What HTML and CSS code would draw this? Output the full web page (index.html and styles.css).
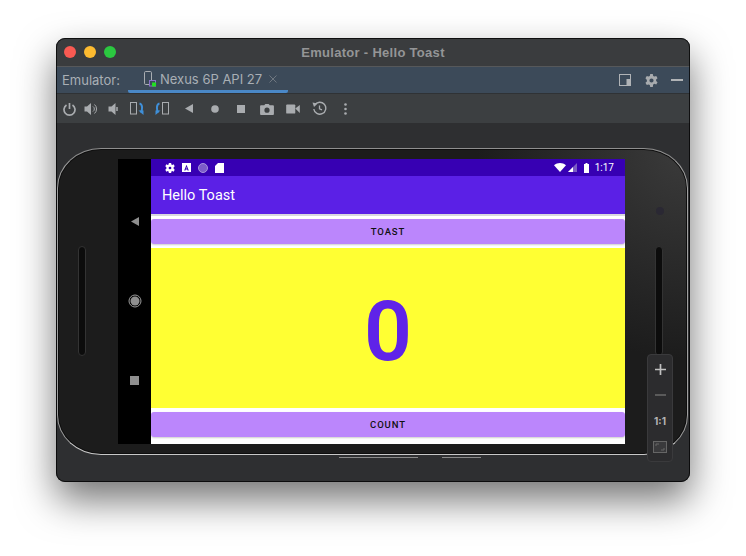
FILE: index.html
```html
<!DOCTYPE html>
<html lang="en">
<head>
    <meta charset="UTF-8">
    <meta name="viewport" content="width=device-width, initial-scale=1.0">
    <title>Emulator - Hello Toast</title>
    <link rel="stylesheet" href="styles.css">
</head>
<body>
    <div class="window">
        <div class="titlebar">
            <div class="lights">
                <span class="light red"></span>
                <span class="light yellow"></span>
                <span class="light green"></span>
            </div>
            <div class="window-title">Emulator - Hello Toast</div>
        </div>

        <div class="tabbar">
            <span class="tool-name">Emulator:</span>
            <div class="tab">
                <svg class="tab-icon" width="14" height="16" viewBox="0 0 14 16">
                    <rect x="0.5" y="0.5" width="7" height="13" rx="1.2" fill="none" stroke="#a9adb1"/>
                    <rect x="5.5" y="9.5" width="6" height="5.500" fill="#3c4a59" stroke="#8a72c8"/>
                    <rect x="8" y="11.500" width="4" height="4" fill="#22e022"/>
                </svg>
                <span class="tab-label">Nexus 6P API 27</span>
                <svg class="tab-close" width="8" height="8" viewBox="0 0 8 8">
                    <path d="M0.5 0.5 7.5 7.5M7.5 0.5 0.5 7.5" stroke="#6f7780" fill="none"/>
                </svg>
            </div>
            <div class="tab-actions">
                <span class="tool">
                    <svg width="12" height="12" viewBox="0 0 12 12">
                        <rect x="0.5" y="0.5" width="11" height="11" fill="none" stroke="#b0b3b6"/>
                        <rect x="7.500" y="5" width="4" height="6.500" fill="#b0b3b6"/>
                    </svg>
                </span>
                <span class="tool">
                    <svg width="13" height="13" viewBox="2 2 20 20">
                        <path fill="#a8abae" fill-rule="evenodd" d="M10 2h4l.6 2.900 1.900 1.100 2.800-1 2 3.500-2.200 1.900v2.200l2.200 1.900-2 3.500-2.800-1-1.900 1.100L14 22h-4l-.6-2.900-1.900-1.100-2.800 1-2-3.500 2.200-1.900v-2.200L2.700 8.500l2-3.500 2.800 1 1.900-1.100zM12 8.800a3.200 3.200 0 1 0 0 6.400 3.200 3.200 0 0 0 0-6.400z"/>
                    </svg>
                </span>
                <span class="tool"><span class="minimize"></span></span>
            </div>
        </div>

        <div class="toolbar">
            <span class="tool narrow"><svg width="13" height="14" viewBox="0 0 13 14"><path d="M3.500 3a5.500 5.500 0 1 0 6 0M6.500 1v6" fill="none" stroke="#a9acaf" stroke-width="1.700"/></svg></span>
            <span class="tool narrow"><svg width="14" height="14" viewBox="0 0 14 14"><path d="M0.500 4.500h2.500l4-3.500v12l-4-3.500h-2.500z" fill="#a9acaf"/><path d="M9 4.500a3 3 0 0 1 0 5M10.500 2.500a6 6 0 0 1 0 9" fill="none" stroke="#a9acaf"/></svg></span>
            <span class="tool narrow"><svg width="11" height="14" viewBox="0 0 11 14"><path d="M0.500 4.500h3l4-3.500v12l-4-3.500h-3z" fill="#a9acaf"/><path d="M9 5v4" stroke="#a9acaf" stroke-width="1.500"/></svg></span>
            <span class="tool"><svg width="15" height="13" viewBox="0 0 15 13"><rect x="0.500" y="0.500" width="6" height="11.500" fill="none" stroke="#a9acaf"/><path d="M9.500 1.500c3 .5 3.500 6.500 1 9" fill="none" stroke="#3f8fd8" stroke-width="2"/><path d="M8.500 8.500h5v4.500z" fill="#3f8fd8"/></svg></span>
            <span class="tool narrow"><svg width="15" height="13" viewBox="0 0 15 13"><path d="M5.500 1.500c-3 .5-3.500 6.500-1 9" fill="none" stroke="#3f8fd8" stroke-width="2"/><path d="M6.500 8.500h-5V13z" fill="#3f8fd8"/><rect x="8.500" y="0.500" width="6" height="11.500" fill="none" stroke="#a9acaf"/></svg></span>
            <span class="tool spaced"><svg width="8" height="9" viewBox="0 0 8 9"><path d="M8 0v9L0 4.500z" fill="#a9acaf"/></svg></span>
            <span class="tool"><svg width="8" height="8" viewBox="0 0 8 8"><circle cx="4" cy="4" r="3.800" fill="#a9acaf"/></svg></span>
            <span class="tool"><svg width="8" height="8" viewBox="0 0 8 8"><rect width="8" height="8" fill="#a9acaf"/></svg></span>
            <span class="tool"><svg width="14" height="12" viewBox="0 0 15 13"><path fill="#a9acaf" fill-rule="evenodd" d="M1 2.500h3.500L5.700 1h3.600l1.200 1.500H14a1 1 0 0 1 1 1V12a1 1 0 0 1-1 1H1a1 1 0 0 1-1-1V3.500a1 1 0 0 1 1-1zM7.500 5a2.800 2.800 0 1 0 0 5.600 2.800 2.800 0 0 0 0-5.600z"/></svg></span>
            <span class="tool"><svg width="14" height="10" viewBox="0 0 15 11"><rect y="0.500" width="10" height="10" rx="1" fill="#a9acaf"/><path d="M10 5l5-4v9z" fill="#a9acaf"/></svg></span>
            <span class="tool"><svg width="15" height="15" viewBox="0 0 15 15"><path d="M2.700 4a6 6 0 1 1-.9 4" fill="none" stroke="#a9acaf" stroke-width="1.400"/><path d="M0.500 1.500l5 1-3.500 3.500z" fill="#a9acaf"/><path d="M7.500 4.500v3.300l2.500 1" fill="none" stroke="#a9acaf" stroke-width="1.300"/></svg></span>
            <span class="tool"><svg width="3" height="12" viewBox="0 0 3 12"><circle cx="1.500" cy="1.500" r="1.300" fill="#a9acaf"/><circle cx="1.500" cy="6" r="1.300" fill="#a9acaf"/><circle cx="1.500" cy="10.500" r="1.300" fill="#a9acaf"/></svg></span>
        </div>

        <div class="canvas">
            <div class="phone">
                <span class="grille grille-left"></span>
                <span class="grille grille-right"></span>
                <span class="camera"></span>

                <div class="navbar">
                    <svg width="8" height="9" viewBox="0 0 8 9"><path d="M8 0v9L0 4.500z" fill="#8f8f8f"/></svg>
                    <svg width="14" height="14" viewBox="0 0 14 14"><circle cx="7" cy="7" r="6" fill="none" stroke="#9a9a9a"/><circle cx="7" cy="7" r="4.500" fill="#8f8f8f"/></svg>
                    <svg width="9" height="9" viewBox="0 0 9 9"><rect width="9" height="9" fill="#8f8f8f"/></svg>
                </div>

                <div class="screen">
                    <div class="statusbar">
                        <div class="status-icons">
                            <svg width="10" height="10" viewBox="1 1 22 22"><path fill="#fff" fill-rule="evenodd" d="M9.500 1h5l.6 3.200 1.800 1 3-1.200 2.500 4.300-2.400 2.100v3.200l2.400 2.100-2.500 4.300-3-1.200-1.800 1-.6 3.200h-5l-.6-3.200-1.800-1-3 1.200-2.500-4.300 2.400-2.100v-3.200L1.600 8.300 4.100 4l3 1.200 1.800-1zM12 9a3 3 0 1 0 0 6 3 3 0 0 0 0-6z"/></svg>
                            <svg width="9" height="9" viewBox="0 0 9 9"><path fill="#fff" fill-rule="evenodd" d="M0 0h9v9H0zM4.500 1.800 2.200 7.500h1.200l.4-1.100h1.400l.4 1.100h1.200zM4.500 3.800l.4 1.600H4.100z"/></svg>
                            <svg width="10" height="10" viewBox="0 0 10 10"><circle cx="5" cy="5" r="4.500" fill="#7d5cc9" stroke="#a794dc"/></svg>
                            <svg width="9" height="10" viewBox="0 0 9 10"><path d="M3 0h6v10H0V3z" fill="#fff"/></svg>
                        </div>
                        <div class="status-right">
                            <svg width="12" height="9" viewBox="0 0 12 9"><path d="M0 2.200C3.500-.7 8.500-.7 12 2.200L6 9z" fill="#fff"/></svg>
                            <svg width="9" height="9" viewBox="0 0 9 9"><path d="M9 0v9H0z" fill="#7a5cc4"/><path d="M5 4v5H0z" fill="#fff"/></svg>
                            <svg class="battery" width="5" height="10" viewBox="0 0 5 10"><path d="M1.500 0h2v1H5v9H0V1h1.500z" fill="#fff"/></svg>
                            <span class="clock">1:17</span>
                        </div>
                    </div>
                    <div class="appbar">Hello Toast</div>
                    <div class="button-row top-row"><div class="app-button">TOAST</div></div>
                    <div class="count-area"><span class="count">0</span></div>
                    <div class="button-row bottom-row"><div class="app-button">COUNT</div></div>
                </div>

                <div class="zoom-panel">
                    <svg width="11" height="11" viewBox="0 0 11 11"><path d="M5.500 0v11M0 5.500h11" stroke="#c0c0c0" stroke-width="1.700"/></svg>
                    <svg width="11" height="2" viewBox="0 0 11 2"><path d="M0 1h11" stroke="#6a6a6a" stroke-width="1.700"/></svg>
                    <span class="zoom-one">1:1</span>
                    <svg width="14" height="12" viewBox="0 0 14 12"><rect x="0.500" y="0.500" width="13" height="11" fill="#3a3a3c" stroke="#666"/><path d="M3 5V3h3M11 7v2H8" fill="none" stroke="#666"/></svg>
                </div>
            </div>
            <div class="home-marks">
                <span class="mark-long"></span>
                <span class="mark-short"></span>
            </div>
        </div>
    </div>
</body>
</html>
```

FILE: styles.css
```css
html, body {
    margin: 0;
    padding: 0;
}
body {
    width: 746px;
    height: 556px;
    overflow: hidden;
    background-color: #ffffff;
    font-family: "Inter", "Liberation Sans", sans-serif;
}
.window {
    position: relative;
    width: 634px;
    height: 444px;
    margin: 38px 0 0 56px;
    display: flex;
    flex-direction: column;
    overflow: hidden;
    border-radius: 9px;
    background-color: #2e2f31;
    box-shadow: 0 18px 38px rgba(0, 0, 0, 0.55);
}
/* thin dark edge drawn over the window contents */
.window::after {
    content: "";
    position: absolute;
    top: 0;
    right: 0;
    bottom: 0;
    left: 0;
    border: 1px solid rgba(0, 0, 0, 0.75);
    border-radius: 9px;
    pointer-events: none;
}
.titlebar {
    position: relative;
    height: 29px;
    flex: none;
    display: flex;
    align-items: center;
    justify-content: center;
    background-color: #3a3c3e;
    border-bottom: 1px solid #56585a;
    box-sizing: border-box;
}
.lights {
    position: absolute;
    left: 8px;
    top: 8px;
    display: flex;
    gap: 8px;
}
.light {
    width: 12px;
    height: 12px;
    border-radius: 50%;
}
.red { background-color: #f95a52; }
.yellow { background-color: #fdbb30; }
.green { background-color: #2bc840; }
.window-title {
    font-family: "Liberation Sans", Arial, sans-serif;
    font-size: 13px;
    font-weight: bold;
    letter-spacing: 0.3px;
    color: #949596;
}
.tabbar {
    height: 27px;
    flex: none;
    display: flex;
    align-items: center;
    padding-left: 6px;
    background-color: #3c4a59;
    border-bottom: 1px solid #2f3235;
    box-sizing: border-box;
    color: #a9afb5;
    font-size: 13px;
}
.tool-name {
    width: 66px;
}
.tab {
    width: 160px;
    height: 26px;
    box-sizing: border-box;
    display: flex;
    align-items: center;
    padding-left: 16px;
    border-bottom: 3px solid #4a88c7;
    border-radius: 0 0 2px 2px;
}
.tab-icon {
    margin-right: 2px;
}
.tab-close {
    margin-left: 7px;
}
.tab-actions {
    margin-left: auto;
    display: flex;
    align-items: center;
}
.tool {
    width: 26px;
    height: 20px;
    flex: none;
    display: flex;
    align-items: center;
    justify-content: center;
}
.tool.narrow {
    width: 22px;
}
.tool.spaced {
    margin-left: 4px;
}
.minimize {
    width: 12px;
    height: 2px;
    background-color: #b0b3b6;
}
.toolbar {
    height: 29px;
    flex: none;
    display: flex;
    align-items: center;
    padding-left: 2px;
    background-color: #3c3f41;
    box-sizing: border-box;
}
.canvas {
    flex: 1;
    position: relative;
    padding: 25px 2px 0 1px;
    background-color: #2e2f31;
}
.phone {
    position: relative;
    height: 307px;
    box-sizing: border-box;
    padding: 10px 0 0 60px;
    display: flex;
    align-items: flex-start;
    background-color: #1b1b1b;
    background-image: radial-gradient(circle at 100% 0, #3b3b3b, #1c1c1c 30%);
    border-radius: 44px / 40px;
    border: 1px solid;
    border-color: #8f8f8f #a0a0a0 #c8c8c8 #a0a0a0;
    box-shadow: inset 0 0 0 1px #0e0e0e;
}
.grille {
    position: absolute;
    top: 97px;
    width: 6px;
    height: 108px;
    border: 1px solid #333;
    border-radius: 4px;
    background-color: #0c0c0c;
}
.grille-left { left: 20px; }
.grille-right { right: 24px; }
.camera {
    position: absolute;
    top: 58px;
    right: 23px;
    width: 8px;
    height: 8px;
    border-radius: 50%;
    background-color: #2a2833;
}
.navbar {
    width: 33px;
    height: 285px;
    flex: none;
    box-sizing: border-box;
    padding: 58px 0 59px;
    display: flex;
    flex-direction: column;
    align-items: center;
    justify-content: space-between;
    background-color: #000000;
}
.screen {
    width: 474px;
    height: 285px;
    flex: none;
    display: flex;
    flex-direction: column;
    background-color: #ffffff;
    font-family: "Roboto", sans-serif;
}
.statusbar {
    height: 17px;
    flex: none;
    display: flex;
    align-items: center;
    justify-content: space-between;
    padding: 0 11px 0 14px;
    background-color: #3700b3;
    color: #ffffff;
}
.status-icons, .status-right {
    display: flex;
    align-items: center;
    gap: 7px;
}
.status-right {
    gap: 2px;
}
.battery {
    margin-left: 5px;
}
.clock {
    margin-left: 4px;
    font-size: 10px;
}
.appbar {
    height: 38px;
    flex: none;
    display: flex;
    align-items: center;
    padding-left: 11px;
    background-color: #5b20e6;
    color: #ffffff;
    font-size: 14.5px;
}
.button-row {
    height: 34px;
    flex: none;
    box-sizing: border-box;
}
.top-row {
    border-top: 2px solid #d9d9de;
    padding-top: 3px;
}
.bottom-row {
    height: 36px;
    padding-top: 4px;
}
.app-button {
    height: 25px;
    display: flex;
    align-items: center;
    justify-content: center;
    background-color: #bb86fc;
    border-radius: 3px;
    box-shadow: 0 1px 2px rgba(0, 0, 0, 0.2);
    color: #111111;
    font-size: 9.5px;
    font-weight: 500;
    letter-spacing: 0.9px;
}
.count-area {
    flex: 1;
    display: flex;
    align-items: center;
    justify-content: center;
    box-sizing: border-box;
    padding-top: 7px;
    background-color: #ffff33;
}
.count {
    color: #5f23e8;
    font-size: 84px;
    font-weight: 600;
    line-height: 1;
}
.zoom-panel {
    position: absolute;
    top: 205px;
    right: 14px;
    width: 26px;
    height: 108px;
    box-sizing: border-box;
    padding-top: 1px;
    display: grid;
    grid-auto-rows: 26px;
    justify-items: center;
    align-items: center;
    background-color: #2c2c2e;
    border: 1px solid #3a3a3c;
    border-radius: 4px;
}
.zoom-one {
    color: #b5b5b5;
    font-size: 10px;
    font-weight: bold;
}
.home-marks {
    position: absolute;
    top: 334px;
    left: 283px;
    display: flex;
    gap: 24px;
}
.mark-long, .mark-short {
    height: 1px;
    background-color: #8a8a8a;
}
.mark-long { width: 79px; }
.mark-short { width: 39px; }
```
